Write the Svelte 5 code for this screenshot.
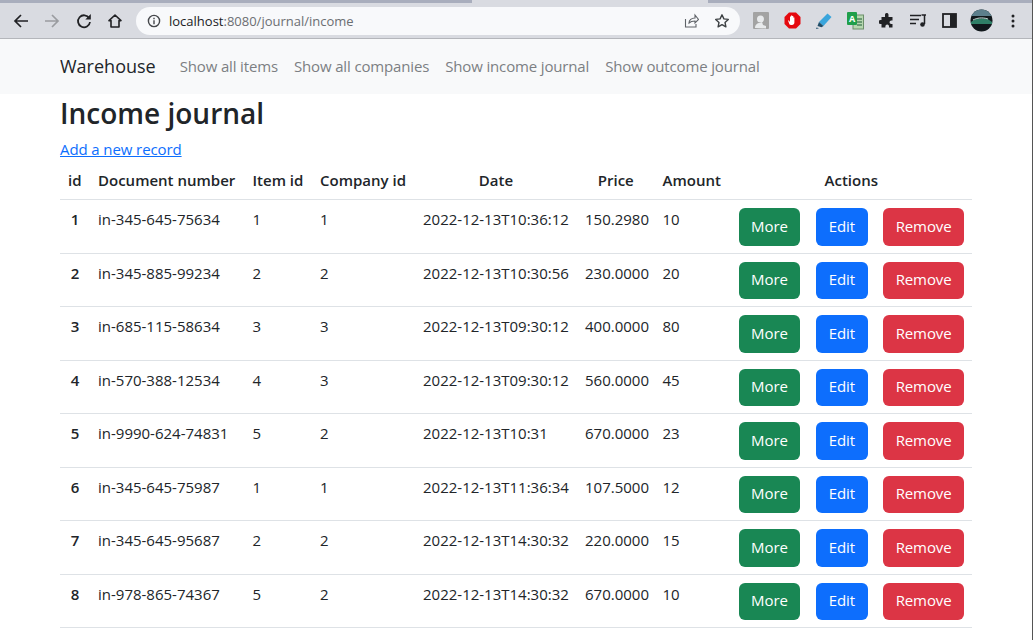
<script>
	const rows = [
		[1, 'in-345-645-75634', 1, 1, '2022-12-13T10:36:12', '150.2980', 10],
		[2, 'in-345-885-99234', 2, 2, '2022-12-13T10:30:56', '230.0000', 20],
		[3, 'in-685-115-58634', 3, 3, '2022-12-13T09:30:12', '400.0000', 80],
		[4, 'in-570-388-12534', 4, 3, '2022-12-13T09:30:12', '560.0000', 45],
		[5, 'in-9990-624-74831', 5, 2, '2022-12-13T10:31', '670.0000', 23],
		[6, 'in-345-645-75987', 1, 1, '2022-12-13T11:36:34', '107.5000', 12],
		[7, 'in-345-645-95687', 2, 2, '2022-12-13T14:30:32', '220.0000', 15],
		[8, 'in-978-865-74367', 5, 2, '2022-12-13T14:30:32', '670.0000', 10]
	];
	const links = ['Show all items', 'Show all companies', 'Show income journal', 'Show outcome journal'];
</script>

<div class="page">
	<div class="browser">
		<div class="tabstrip"><div class="tabstrip__gap"></div></div>
		<div class="toolbar">
			<div class="nav-icons">
				<svg width="16" height="16" viewBox="0 0 16 16"><path d="M15 8H2M8 2L2 8l6 6" fill="none" stroke="#202124" stroke-width="1.7"/></svg>
				<svg width="16" height="16" viewBox="0 0 16 16"><path d="M1 8h13M8 2l6 6-6 6" fill="none" stroke="#9a9ca0" stroke-width="1.7"/></svg>
				<svg width="16" height="16" viewBox="0 0 16 16"><path d="M13.200 5.200A6 6 0 1 0 14 9" fill="none" stroke="#202124" stroke-width="1.800"/><path d="M14.800 1v5.500H9.300z" fill="#202124"/></svg>
				<svg width="16" height="16" viewBox="0 0 16 16"><path d="M8 2L2 7.600h2v6.400h8V7.600h2z" fill="none" stroke="#202124" stroke-width="1.600" stroke-linejoin="round"/></svg>
			</div>
			<div class="omnibox">
				<svg width="14" height="14" viewBox="0 0 14 14"><circle cx="7" cy="7" r="5.600" fill="none" stroke="#45474b" stroke-width="1.400"/><path d="M7 6.200v4M7 3.800v1.400" stroke="#45474b" stroke-width="1.400"/></svg>
				<span class="url"><b>localhost</b>:8080/journal/income</span>
				<svg class="share" width="16" height="16" viewBox="0 0 16 16"><path d="M2.500 6v8h10.500v-3M6 10c0-3 2.500-5 6-5V2l3.500 4.500L12 10V8c-2.500 0-4.500.5-6 2z" fill="none" stroke="#5f6368" stroke-width="1.100"/></svg>
				<svg width="16" height="16" viewBox="0 0 16 16"><path d="M8 1.800l1.900 4.100 4.400.5-3.300 3 .9 4.400L8 11.600l-3.900 2.200.9-4.400-3.300-3 4.400-.5z" fill="none" stroke="#3c4043" stroke-width="1.400" stroke-linejoin="round"/></svg>
			</div>
			<div class="extensions">
				<span class="ext"><svg width="16" height="17" viewBox="0 0 16 17"><rect width="16" height="17" rx="1" fill="#a3a3a3"/><circle cx="7.500" cy="7" r="3.500" fill="#e8eaec"/><path d="M2 16c0-3 2-5 5-5l2-1 1 3 3 1v2.500z" fill="#e8eaec"/></svg></span>
				<span class="ext"><svg width="17" height="17" viewBox="0 0 17 17"><path d="M5 .5h7L16.500 5v7L12 16.500H5L.5 12V5z" fill="#e5090f"/><path d="M5.500 12.500L4 8.500h1l1 1.500V4.500h1V8V3.500h1.200V8V4h1.100v4.500V5.500h1.100v5c0 1.500-1 2.500-2.400 2.500H7c-.7 0-1.200-.2-1.500-.5z" fill="#fff"/></svg></span>
				<span class="ext"><svg width="18" height="18" viewBox="0 0 18 18"><path d="M12.500 1.500l4 3.500-8 9-4.500-4z" fill="#3aa5dc"/><path d="M4 10l4.500 4-2 1.300-4-1.300z" fill="#1f4d68"/><path d="M1.500 15.500l2.500.8-3 .7z" fill="#1f4d68"/></svg></span>
				<span class="ext"><svg width="17" height="18" viewBox="0 0 17 18"><rect x="6" y="3" width="10.500" height="14" fill="#b6d7b0" stroke="#6d8f6b"/><rect width="10" height="13" rx="1" fill="#1f9f4b"/><text x="2" y="10" class="ext-letter">A</text><path d="M10 7h5M10 10h5M10 13h5" stroke="#1e5a36"/></svg></span>
				<span class="ext"><svg width="16" height="16" viewBox="0 0 16 16"><path d="M6 1.500a1.800 1.800 0 0 1 3.500 0V4h4v3.500h-1.200a1.800 1.800 0 0 0 0 3.600h1.200v3.400H10v-1.200a1.800 1.800 0 0 0-3.600 0v1.200H2.500v-3.600H1.400a1.900 1.900 0 0 1 0-3.800h1.100V4H6z" fill="#202124"/></svg></span>
				<span class="ext"><svg width="16" height="14" viewBox="0 0 16 14"><path d="M0 1.500h11M0 5.500h9M0 9.500h6M14.500 1v9" stroke="#202124" stroke-width="1.500" fill="none"/><path d="M11.500 1h4.500" stroke="#202124" stroke-width="1.500"/><circle cx="12.500" cy="10.500" r="2.300" fill="#202124"/></svg></span>
				<span class="ext"><svg width="15" height="15" viewBox="0 0 15 15"><rect x="1" y="1" width="13" height="13" fill="none" stroke="#202124" stroke-width="1.800"/><rect x="8" y="1" width="6" height="13" fill="#202124"/></svg></span>
				<span class="ext"><svg width="23" height="23" viewBox="0 0 23 23"><defs><clipPath id="avatar"><circle cx="11.500" cy="11.500" r="11"/></clipPath></defs><g clip-path="url(#avatar)"><rect width="23" height="23" fill="#11181c"/><rect width="23" height="7" fill="#5c7f8c"/><path d="M1 13c3-3 8-4 13-3.500 3 .3 6 1.500 8 3.500v2H1z" fill="#2f7f67"/><path d="M3 11c4-2 9-3 15-1" stroke="#c8d8d8" fill="none"/></g></svg></span>
				<span class="ext"><svg width="4" height="14" viewBox="0 0 4 14"><circle cx="2" cy="2" r="1.500" fill="#202124"/><circle cx="2" cy="7" r="1.500" fill="#202124"/><circle cx="2" cy="12" r="1.500" fill="#202124"/></svg></span>
			</div>
		</div>
	</div>

	<nav class="navbar">
		<a class="brand" href="#top">Warehouse</a>
		{#each links as link}
			<a class="nav-link" href="#top">{link}</a>
		{/each}
	</nav>

	<main class="content">
		<h1>Income journal</h1>
		<a class="add-link" href="#top">Add a new record</a>
		<table>
			<colgroup>
				<col style="width: 30px" />
				<col style="width: 154.5px" />
				<col style="width: 67.5px" />
				<col style="width: 103px" />
				<col style="width: 162px" />
				<col style="width: 77.5px" />
				<col style="width: 76px" />
				<col style="width: 241.5px" />
			</colgroup>
			<thead>
				<tr>
					<th>id</th>
					<th>Document number</th>
					<th>Item id</th>
					<th>Company id</th>
					<th class="center">Date</th>
					<th class="center">Price</th>
					<th>Amount</th>
					<th class="center">Actions</th>
				</tr>
			</thead>
			<tbody>
				{#each rows as row}
					<tr>
						<th>{row[0]}</th>
						<td>{row[1]}</td>
						<td>{row[2]}</td>
						<td>{row[3]}</td>
						<td>{row[4]}</td>
						<td>{row[5]}</td>
						<td>{row[6]}</td>
						<td>
							<div class="actions">
								<button class="btn btn--more">More</button>
								<button class="btn btn--edit">Edit</button>
								<button class="btn btn--remove">Remove</button>
							</div>
						</td>
					</tr>
				{/each}
			</tbody>
		</table>
	</main>
</div>

<style>
	:global(body) {
		margin: 0;
		background: #fff;
		overflow: hidden;
	}

	.page {
		height: 640px;
		border-right: 1px solid #555;
		box-sizing: border-box;
		overflow: hidden;
		font-family: 'Open Sans', sans-serif;
		font-size: 15px;
		color: #212529;
	}

	.browser {
		background: #d9dbe1;
		border-bottom: 1px solid #b4b6bb;
	}

	.tabstrip {
		position: relative;
		height: 3px;
		background: #a9aebd;
	}

	.tabstrip__gap {
		position: absolute;
		left: 472px;
		width: 236px;
		height: 100%;
		background: #d9dbe1;
	}

	.toolbar {
		display: flex;
		align-items: center;
		height: 35px;
	}

	.nav-icons {
		display: flex;
		align-items: center;
		gap: 15.300px;
		width: 136px;
		padding-left: 13px;
		box-sizing: border-box;
	}

	.omnibox {
		display: flex;
		align-items: center;
		gap: 8px;
		width: 604px;
		height: 28px;
		padding: 0 10px 0 11px;
		box-sizing: border-box;
		border-radius: 14px;
		background: #f8f9fb;
	}

	.url {
		flex: 1;
		font-size: 13px;
		color: #6b6e72;
	}

	.url b {
		font-weight: 400;
		color: #202124;
	}

	.share {
		margin-right: 7px;
	}

	.extensions {
		display: flex;
		align-items: center;
		padding-left: 5px;
	}

	.ext {
		display: flex;
		justify-content: center;
		width: 31.500px;
	}

	.ext-letter {
		font-size: 9px;
		font-weight: 700;
		fill: #fff;
	}

	.navbar {
		display: flex;
		align-items: center;
		gap: 16px;
		height: 54px;
		padding: 0 0 1px 60px;
		background: #f8f9fa;
	}

	.brand {
		margin-right: 8px;
		font-size: 18px;
		color: #212529;
		text-decoration: none;
	}

	.nav-link {
		font-size: 15px;
		letter-spacing: -0.15px;
		color: #7c7f83;
		text-decoration: none;
	}

	.content {
		padding-left: 60px;
		width: 912px;
	}

	h1 {
		margin: 0;
		font-size: 28px;
		font-weight: 600;
		line-height: 38px;
	}

	.add-link {
		display: block;
		margin-top: 6px;
		line-height: 22px;
		font-size: 15px;
		letter-spacing: -0.1px;
		color: #0d6efd;
	}

	table {
		width: 912px;
		margin-top: 3px;
		table-layout: fixed;
		border-collapse: collapse;
	}

	th,
	td {
		padding: 8px 8px 7px;
		border-bottom: 1px solid #dee2e6;
		vertical-align: top;
		text-align: left;
		font-size: 15px;
		line-height: 22px;
		white-space: nowrap;
	}

	th {
		font-weight: 600;
	}

	thead th {
		padding: 5px 8px 7px;
		line-height: 24px;
	}

	tbody th {
		text-align: center;
	}

	.center {
		text-align: center;
	}

	tbody tr {
		height: 53.500px;
	}

	.actions {
		display: flex;
		gap: 15.500px;
	}

	.btn {
		height: 37.500px;
		padding: 0 0 2px;
		border: 0;
		border-radius: 6px;
		font-family: inherit;
		font-size: 15px;
		letter-spacing: -0.1px;
		color: #fff;
	}

	.btn--more {
		width: 62px;
		background: #198754;
	}

	.btn--edit {
		width: 52px;
		background: #0d6efd;
	}

	.btn--remove {
		width: 81px;
		background: #dc3545;
	}
</style>
